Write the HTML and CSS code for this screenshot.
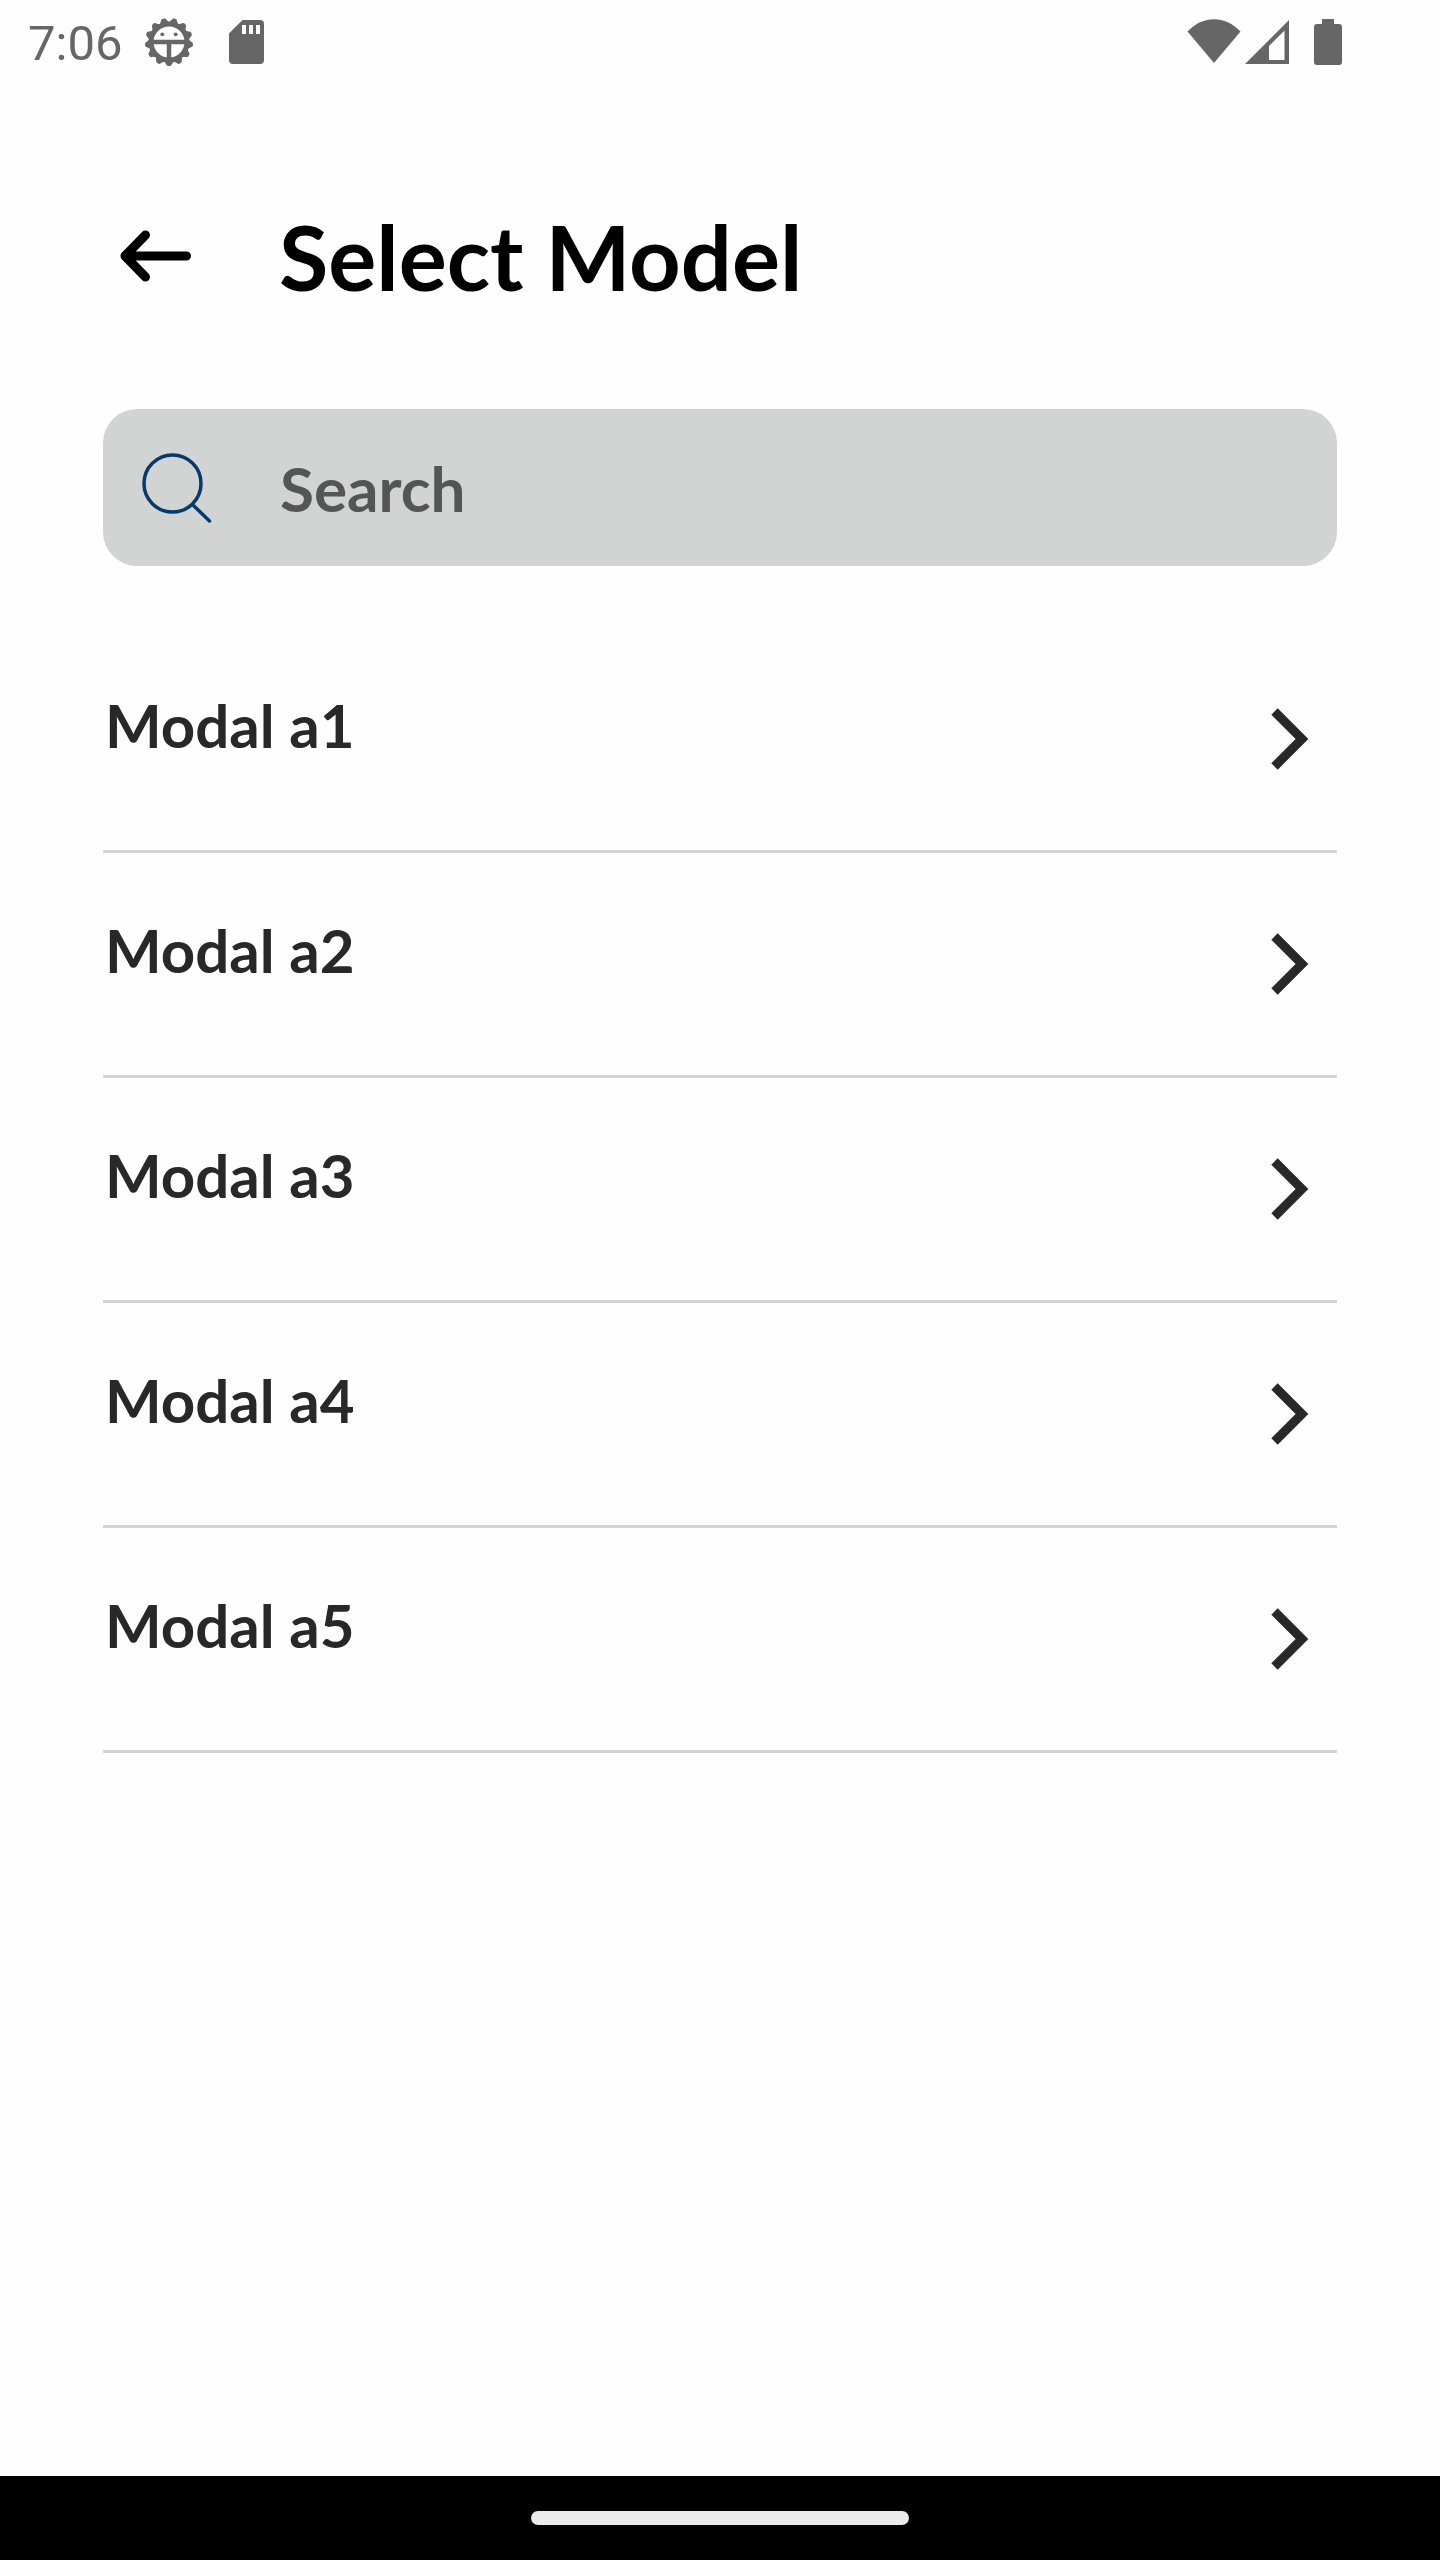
FILE: index.html
```html
<!DOCTYPE html>
<html lang="en">
<head>
<meta charset="utf-8">
<meta name="viewport" content="width=device-width, initial-scale=1">
<title>Select Model</title>
<link rel="stylesheet" href="styles.css">
</head>
<body>
<svg class="defs" aria-hidden="true">
  <symbol id="chevron" viewBox="0 0 38 62"><path d="M3.5 3.5 31 31 3.5 58.5" fill="none" stroke="currentColor" stroke-width="9"/></symbol>
  <symbol id="tooth" viewBox="0 0 50 50"><path d="M21 43 24 47.8h2l3-4.800z" fill="currentColor" stroke="currentColor" stroke-width="2.500" stroke-linejoin="round"/></symbol>
</svg>
<div class="screen">
  <div class="status">
    <div class="status-left">
      <span class="time">7:06</span>
      <svg class="gear" viewBox="0 0 50 50" aria-hidden="true">
        <circle cx="25" cy="25" r="18" fill="none" stroke="currentColor" stroke-width="5"/>
        <g>
          <use href="#tooth"/>
          <use href="#tooth" transform="rotate(27.690 25 25)"/>
          <use href="#tooth" transform="rotate(55.380 25 25)"/>
          <use href="#tooth" transform="rotate(83.080 25 25)"/>
          <use href="#tooth" transform="rotate(110.770 25 25)"/>
          <use href="#tooth" transform="rotate(138.460 25 25)"/>
          <use href="#tooth" transform="rotate(166.150 25 25)"/>
          <use href="#tooth" transform="rotate(193.850 25 25)"/>
          <use href="#tooth" transform="rotate(221.540 25 25)"/>
          <use href="#tooth" transform="rotate(249.230 25 25)"/>
          <use href="#tooth" transform="rotate(276.920 25 25)"/>
          <use href="#tooth" transform="rotate(304.620 25 25)"/>
          <use href="#tooth" transform="rotate(332.310 25 25)"/>
        </g>
        <path d="M8 25h34M25 25v17" fill="none" stroke="currentColor" stroke-width="4.500"/>
        <circle cx="18.300" cy="17.300" r="1.900" fill="currentColor"/>
        <circle cx="31.700" cy="17.300" r="1.900" fill="currentColor"/>
      </svg>
      <svg class="card" viewBox="0 0 36 48" aria-hidden="true"><path fill="currentColor" fill-rule="evenodd" d="M13.500 2H31a4 4 0 0 1 4 4v36a4 4 0 0 1-4 4H4a4 4 0 0 1-4-4V15.500zM13 7v9h4V7zm7 0v9h4V7zm7 0v9h4V7z"/></svg>
    </div>
    <div class="status-right">
      <svg class="wifi" viewBox="0 0 54 48" aria-hidden="true"><path fill="currentColor" d="M27 45 .5 13.500C16-3 38-3 53.500 13.500z"/></svg>
      <svg class="signal" viewBox="0 0 44 48" aria-hidden="true"><path fill="currentColor" fill-rule="evenodd" d="M0 46 44 2v44zM24 28v14h15.500V12.500z"/></svg>
      <svg class="battery" viewBox="0 0 28 48" aria-hidden="true"><path fill="currentColor" d="M8 1h12v5h5a3 3 0 0 1 3 3v35a3 3 0 0 1-3 3H3a3 3 0 0 1-3-3V9a3 3 0 0 1 3-3h5z"/></svg>
    </div>
  </div>
  <main class="content">
    <header class="header">
      <button class="back" type="button" aria-label="Back">
        <svg viewBox="0 0 72 56" aria-hidden="true"><path d="M26.500 7 6 28l20.500 21M10 28h57.500" fill="none" stroke="currentColor" stroke-width="9" stroke-linecap="round" stroke-linejoin="round"/></svg>
      </button>
      <h1 class="title">Select Model</h1>
    </header>
    <label class="search">
      <svg viewBox="0 0 72 72" aria-hidden="true"><path d="M30.500 3a28.500 28.500 0 1 1 0 57 28.500 28.500 0 0 1 0-57zM51 53l16.500 16" fill="none" stroke="currentColor" stroke-width="3.500" stroke-linecap="round"/></svg>
      <input type="search" placeholder="Search" aria-label="Search">
    </label>
    <ul class="models">
      <li><a href="#a1"><span>Modal a1</span><svg aria-hidden="true"><use href="#chevron"/></svg></a></li>
      <li><a href="#a2"><span>Modal a2</span><svg aria-hidden="true"><use href="#chevron"/></svg></a></li>
      <li><a href="#a3"><span>Modal a3</span><svg aria-hidden="true"><use href="#chevron"/></svg></a></li>
      <li><a href="#a4"><span>Modal a4</span><svg aria-hidden="true"><use href="#chevron"/></svg></a></li>
      <li><a href="#a5"><span>Modal a5</span><svg aria-hidden="true"><use href="#chevron"/></svg></a></li>
    </ul>
  </main>
  <div class="navbar"><div class="handle"></div></div>
</div>
</body>
</html>
```
FILE: styles.css
```css
* { box-sizing: border-box; }
body {
  margin: 0;
  background: #fefefe;
  color: #282828;
  font-family: Lato, "Open Sans", sans-serif;
  font-weight: 700;
}
svg { display: block; flex: none; }
.defs { position: absolute; width: 0; height: 0; }
.screen { display: flex; flex-direction: column; min-height: 100vh; }

.status {
  display: flex;
  justify-content: space-between;
  height: 84px;
  padding: 0 98px 0 28px;
  color: #666;
}
.status-left, .status-right { display: flex; align-items: center; }
.time { padding-top: 4px; font: 400 49px/60px Roboto, sans-serif; }
.gear { width: 50px; height: 50px; margin-left: 22px; }
.card { width: 36px; height: 48px; margin-left: 35px; }
.wifi { width: 54px; height: 48px; }
.signal { width: 44px; height: 48px; margin-left: 4px; }
.battery { width: 28px; height: 48px; margin-left: 25px; }

.content { flex: 1; padding: 116px 103px 0; }
.header { display: flex; align-items: center; height: 112px; color: #000; }
.back {
  display: flex;
  justify-content: flex-start;
  width: 176px;
  padding: 0 0 0 16px;
  border: 0;
  background: none;
  color: inherit;
}
.back svg { width: 72px; height: 56px; margin-top: -1px; }
.title { margin: 0; font-size: 90px; line-height: 112px; font-weight: 700; }

.search {
  display: flex;
  align-items: center;
  height: 157px;
  margin-top: 97px;
  padding-left: 39px;
  border-radius: 34px;
  background: #d2d4d3;
  color: #053a6b;
}
.search svg { width: 72px; height: 72px; }
.search input {
  flex: 1;
  min-width: 0;
  height: 100%;
  margin-left: 66px;
  padding: 0;
  border: 0;
  outline: 0;
  background: none;
  color: #282828;
  font: inherit;
  font-size: 62px;
}
.search input::placeholder { color: #555; opacity: 1; }

.models { margin: 62px 0 0; padding: 0; list-style: none; }
.models a {
  display: flex;
  align-items: center;
  justify-content: space-between;
  height: 225px;
  padding-right: 28px;
  border-bottom: 3px solid #d2d4d3;
  color: inherit;
  text-decoration: none;
}
.models span { padding: 0 0 28px 2px; font-size: 60px; line-height: 72px; }
.models svg { width: 38px; height: 62px; }

.navbar {
  display: flex;
  align-items: center;
  justify-content: center;
  height: 84px;
  background: #000;
}
.handle { width: 378px; height: 14px; border-radius: 7px; background: #ebebeb; }
```
